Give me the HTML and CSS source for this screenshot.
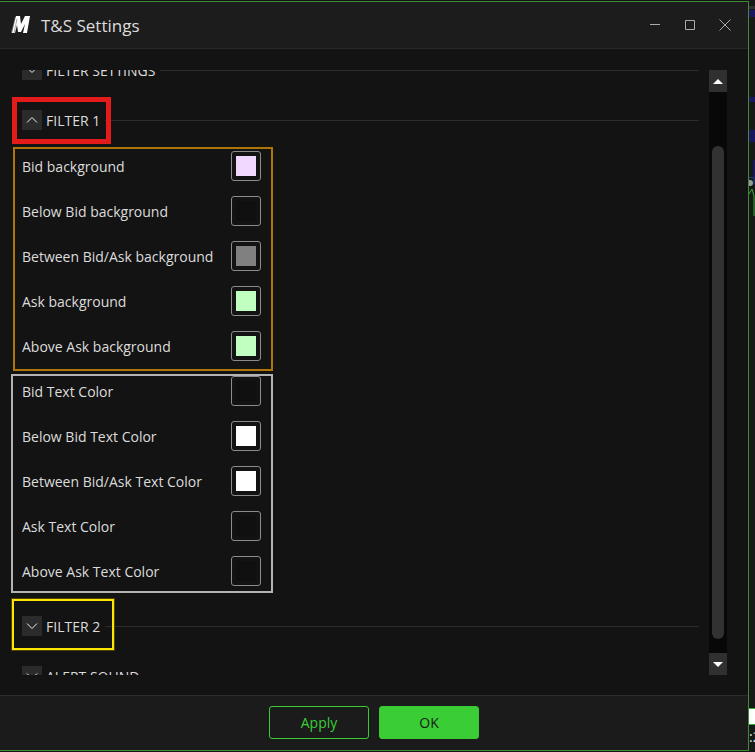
FILE: index.html
```html
<!DOCTYPE html>
<html lang="en">
<head>
<meta charset="utf-8">
<title>T&amp;S Settings</title>
<link rel="stylesheet" href="styles.css">
</head>
<body>
<main class="dialog">
  <header class="titlebar">
    <svg class="logo" viewBox="0 0 20 20" aria-hidden="true">
      <path d="M0 18 4 2h3L3 18z" fill="#666"/>
      <path d="M5 1h4l1 8 4-8h5l-3 17h-4l2-9-4 8H7L6 10 4 18H1z" fill="#fff"/>
      <path d="M3 18 6 4" stroke="#aaa" fill="none"/>
    </svg>
    <h1 class="title">T&amp;S Settings</h1>
    <button class="winbtn" aria-label="Minimize"><svg viewBox="0 0 12 12"><path d="M1 5.5h10"/></svg></button>
    <button class="winbtn" aria-label="Maximize"><svg viewBox="0 0 12 12"><path d="M1.5 1.5h9v9h-9z"/></svg></button>
    <button class="winbtn" aria-label="Close"><svg viewBox="0 0 12 12"><path d="M.5.5l11 11M11.5.5l-11 11"/></svg></button>
  </header>

  <div class="content">
    <div class="viewport">
      <div class="settings">
        <section class="section">
          <button class="toggle"><span class="chev"><svg viewBox="0 0 12 6"><path d="M1 .5l5 5 5-5"/></svg></span><span class="name">FILTER SETTINGS</span></button>
          <span class="rule"></span>
        </section>
        <section class="section first">
          <button class="toggle mark red"><span class="chev"><svg viewBox="0 0 12 6"><path d="M1 5.5l5-5 5 5"/></svg></span><span class="name">FILTER 1</span></button>
          <span class="rule"></span>
        </section>
        <div class="group orange">
          <div class="row"><label for="c1">Bid background</label><input id="c1" type="color" value="#f0d8ff"></div>
          <div class="row"><label for="c2">Below Bid background</label><input id="c2" type="color" value="#101010"></div>
          <div class="row"><label for="c3">Between Bid/Ask background</label><input id="c3" type="color" value="#808080"></div>
          <div class="row"><label for="c4">Ask background</label><input id="c4" type="color" value="#c0ffc0"></div>
          <div class="row"><label for="c5">Above Ask background</label><input id="c5" type="color" value="#c0ffc0"></div>
        </div>
        <div class="group white">
          <div class="row"><label for="c6">Bid Text Color</label><input id="c6" type="color" value="#101010"></div>
          <div class="row"><label for="c7">Below Bid Text Color</label><input id="c7" type="color" value="#ffffff"></div>
          <div class="row"><label for="c8">Between Bid/Ask Text Color</label><input id="c8" type="color" value="#ffffff"></div>
          <div class="row"><label for="c9">Ask Text Color</label><input id="c9" type="color" value="#101010"></div>
          <div class="row"><label for="c10">Above Ask Text Color</label><input id="c10" type="color" value="#101010"></div>
        </div>
        <section class="section second">
          <button class="toggle mark yellow"><span class="chev"><svg viewBox="0 0 12 6"><path d="M1 .5l5 5 5-5"/></svg></span><span class="name">FILTER 2</span></button>
          <span class="rule"></span>
        </section>
        <section class="section last">
          <button class="toggle"><span class="chev"><svg viewBox="0 0 12 6"><path d="M1 .5l5 5 5-5"/></svg></span><span class="name">ALERT SOUND</span></button>
          <span class="rule"></span>
        </section>
      </div>
    </div>
    <div class="scrollbar">
      <button class="arrow" aria-label="Scroll up"><svg viewBox="0 0 10 5"><path d="M0 5l5-5 5 5z"/></svg></button>
      <div class="track"><div class="thumb"></div></div>
      <button class="arrow" aria-label="Scroll down"><svg viewBox="0 0 10 5"><path d="M0 0l5 5 5-5z"/></svg></button>
    </div>
  </div>

  <footer class="footer">
    <button class="btn apply">Apply</button>
    <button class="btn ok">OK</button>
  </footer>
</main>
<aside class="behind">
  <svg class="chart" viewBox="0 0 6 220" aria-hidden="true">
    <path d="M0 6h6v3H0z" fill="#303030"/>
    <path d="M0 10h6v7H0zM0 97h6v5H0zM0 130h6v12H0zM4 160h2v18H4z" fill="#1a1660"/>
    <path d="M0 177.500h5v7" stroke="#203890" fill="none"/>
    <circle cx="1" cy="183" r="3" fill="#999"/>
    <path d="M0 194l3-5 2 7v20" stroke="#2fb02f" fill="none"/>
  </svg>
  <div class="price"></div>
  <div class="time">:2</div>
</aside>
</body>
</html>
```
FILE: styles.css
```css
* { box-sizing: border-box; }

body {
  margin: 0;
  height: 100vh;
  display: flex;
  overflow: hidden;
  background: #131313;
  color: #dcdcdc;
  font: 14px/20px "Open Sans", "Noto Sans", sans-serif;
}

button {
  margin: 0;
  padding: 0;
  border: 0;
  background: none;
  color: inherit;
  font: inherit;
}

svg { display: block; }

.dialog {
  flex: 1;
  display: flex;
  flex-direction: column;
  margin: 1px 0;
  border: 1px solid #3c8c34;
  border-left: 0;
  background: #131313;
}

.titlebar {
  display: flex;
  align-items: center;
  height: 47px;
  padding: 0 11px;
  border-bottom: 1px solid #282828;
  background: #1c1c1c;
}

.logo { width: 20px; height: 20px; }

.title {
  flex: 1;
  margin: 0 0 0 10px;
  padding-top: 1px;
  font-size: 17px;
  font-weight: 400;
  line-height: 24px;
}

.winbtn {
  display: grid;
  place-items: center;
  width: 25px;
  height: 24px;
  margin-left: 10px;
}

.winbtn svg {
  width: 12px;
  height: 12px;
  fill: none;
  stroke: #aaa;
}

.content {
  flex: 1;
  display: flex;
  gap: 10px;
  min-height: 0;
  padding: 21px 21px 20px 11px;
}

.viewport { flex: 1; overflow: hidden; }

.settings { margin-top: -10px; }

.section {
  display: flex;
  align-items: center;
  gap: 5px;
  padding-left: 11px;
}

.section.first { margin-top: 30px; }
.section.second { margin-top: 23px; }
.section.last { margin-top: 30px; }

.toggle {
  position: relative;
  display: flex;
  align-items: center;
  gap: 4px;
  height: 20px;
}

.name,
.row label { padding-top: 2px; }

.chev {
  display: grid;
  place-items: center;
  width: 20px;
  height: 20px;
  background: #2b2b2b;
}

.chev svg {
  width: 12px;
  height: 6px;
  fill: none;
  stroke: #eee;
}

.mark::after {
  content: "";
  position: absolute;
}

.red::after {
  inset: -13px -11px -14px -10px;
  border: 5px solid #e41b1b;
}

.yellow::after {
  inset: -17px -14px -14px -10px;
  border: 2px solid #ffe600;
  outline: 1px solid #4a4408;
}

.rule {
  flex: 1;
  height: 1px;
  background: #2c2c2c;
}

.group {
  display: flex;
  flex-direction: column;
  gap: 15px;
  width: 262px;
}

.orange {
  width: 260px;
  margin: 17px 0 3px 2px;
  padding: 2px 10px 8px 7px;
  border: 2px solid #b07508;
}

.white {
  padding: 0 10px 5px 9px;
  border: 2px solid #b4b4b4;
}

.row {
  display: flex;
  align-items: center;
  justify-content: space-between;
  height: 30px;
}

input[type="color"] {
  appearance: none;
  width: 30px;
  height: 30px;
  padding: 4px;
  border: 1px solid #8c8c8c;
  border-radius: 3px;
  background: #131313;
}

input[type="color"]::-webkit-color-swatch-wrapper { padding: 0; }
input[type="color"]::-webkit-color-swatch { border: 0; border-radius: 0; }

.scrollbar {
  display: flex;
  flex-direction: column;
  width: 18px;
}

.arrow {
  display: grid;
  place-items: center;
  height: 22px;
  background: #303030;
}

.arrow svg { width: 10px; height: 5px; fill: #fff; }

.track {
  flex: 1;
  padding: 54px 3px 14px;
  background: #080808;
}

.thumb {
  height: 100%;
  border-radius: 6px;
  background: #323232;
}

.footer {
  display: flex;
  justify-content: center;
  gap: 10px;
  height: 55px;
  padding: 10px 0;
  border-top: 1px solid #2c2c2c;
  background: #1b1b1b;
}

.btn {
  width: 100px;
  height: 33px;
  border: 1px solid #38c933;
  border-radius: 3px;
}

.apply { color: #3acd36; }
.ok { background: #3acd36; color: #161c16; }

.behind {
  display: flex;
  flex-direction: column;
  width: 6px;
  overflow: hidden;
  background: #181818;
}

.chart { width: 6px; height: 220px; }

.price {
  height: 17px;
  margin-top: auto;
  border: solid #2fb02f;
  border-width: 1px 0;
  background: #fff;
}

.time { height: 27px; line-height: 24px; }
```
